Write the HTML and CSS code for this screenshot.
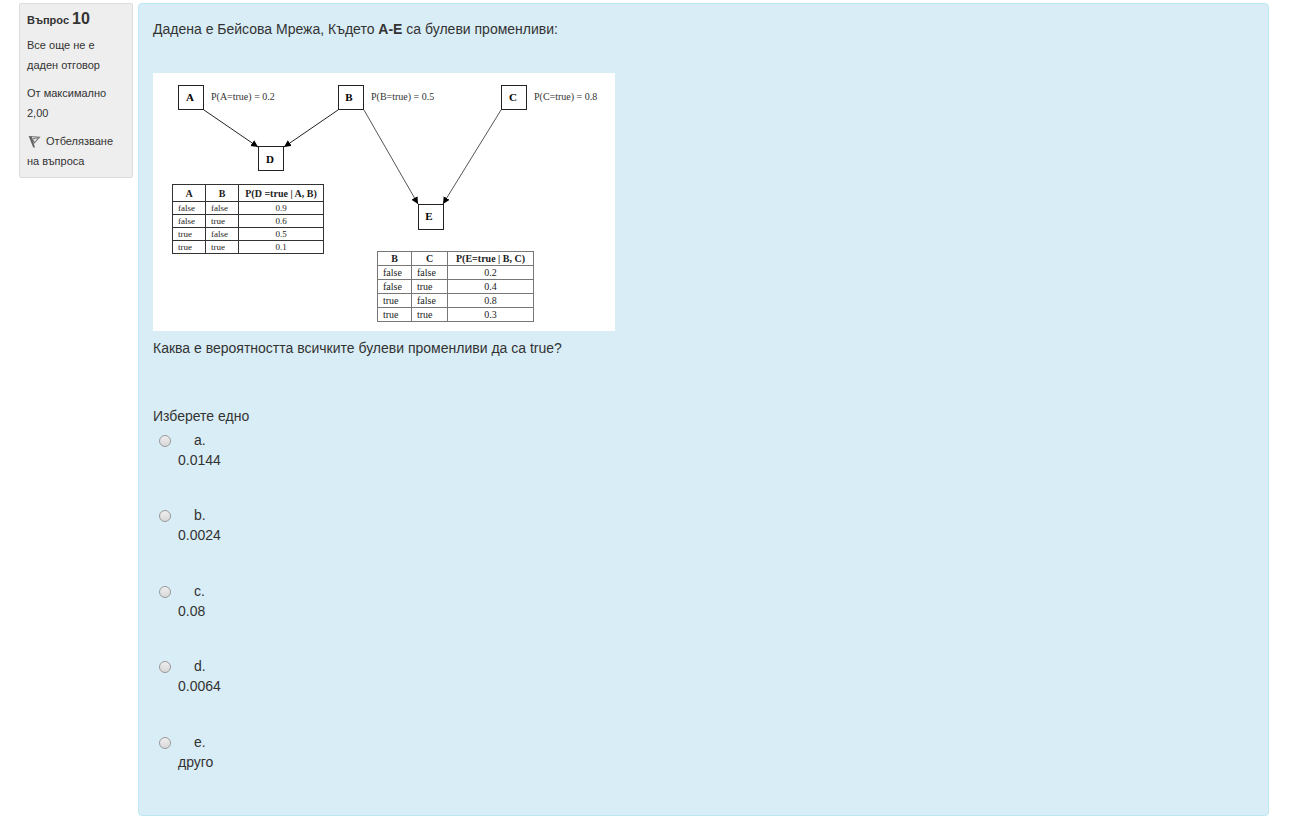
FILE: index.html
```html
<!DOCTYPE html>
<html lang="bg">
<head>
<meta charset="utf-8">
<title>Въпрос 10</title>
<link rel="stylesheet" href="styles.css">
</head>
<body>
<main class="question">
  <aside class="info">
    <h3 class="info-title">Въпрос <span class="number">10</span></h3>
    <p class="info-text">Все още не е даден отговор</p>
    <p class="info-text">От максимално 2,00</p>
    <p class="info-text"><svg class="flag" viewBox="0 0 16 16" aria-hidden="true"><path d="M3 2.5 12.5 3.2 7.4 8.8 5.4 5.2M12.5 3.2 5.6 5" fill="none" stroke="#777" stroke-width="1.1"/><path d="M1.6 2 4.8 2.6 8 13.4H6.2Z" fill="#666"/></svg> Отбелязване на въпроса</p>
  </aside>
  <section class="formulation">
    <p class="text">Дадена е Бейсова Мрежа, Където <b>A-E</b> са булеви променливи:</p>
    <div class="network">
      <svg class="graph" width="462" height="258" viewBox="0 0 462 258">
        <defs>
          <marker id="arrow" markerUnits="userSpaceOnUse" markerWidth="8" markerHeight="8" refX="7" refY="3.5" orient="auto"><path d="M0 0 7 3.5 0 7Z"/></marker>
        </defs>
        <g class="edges">
          <path d="M51 37 105 74"/>
          <path d="M185 37 131 74"/>
          <path class="thin" d="M211 37 265 131"/>
          <path class="thin" d="M348 37 290 131"/>
        </g>
        <g class="nodes">
          <rect x="25.5" y="12.5" width="25" height="24"/>
          <rect x="185.5" y="12.5" width="25" height="24"/>
          <rect x="348.5" y="12.5" width="25" height="24"/>
          <rect x="105.5" y="73.5" width="25" height="24"/>
          <rect x="265.5" y="131.5" width="25" height="25"/>
        </g>
        <g class="names">
          <text x="37" y="28">A</text>
          <text x="196" y="28">B</text>
          <text x="360" y="28">C</text>
          <text x="117" y="90">D</text>
          <text x="276" y="147">E</text>
        </g>
        <g class="priors">
          <text x="58" y="27">P(A=true) = 0.2</text>
          <text x="218" y="27">P(B=true) = 0.5</text>
          <text x="381" y="27">P(C=true) = 0.8</text>
        </g>
      </svg>
      <table class="cpt cpt-d">
        <thead><tr><th>A</th><th>B</th><th>P(D =true | A, B)</th></tr></thead>
        <tbody>
          <tr><td>false</td><td>false</td><td>0.9</td></tr>
          <tr><td>false</td><td>true</td><td>0.6</td></tr>
          <tr><td>true</td><td>false</td><td>0.5</td></tr>
          <tr><td>true</td><td>true</td><td>0.1</td></tr>
        </tbody>
      </table>
      <table class="cpt cpt-e">
        <thead><tr><th>B</th><th>C</th><th>P(E=true | B, C)</th></tr></thead>
        <tbody>
          <tr><td>false</td><td>false</td><td>0.2</td></tr>
          <tr><td>false</td><td>true</td><td>0.4</td></tr>
          <tr><td>true</td><td>false</td><td>0.8</td></tr>
          <tr><td>true</td><td>true</td><td>0.3</td></tr>
        </tbody>
      </table>
    </div>
    <p class="text">Каква е вероятността всичките булеви променливи да са true?</p>
    <fieldset class="answers">
      <legend class="prompt">Изберете едно</legend>
      <div class="options">
        <div class="option"><input type="radio" name="answer" id="a"><label for="a"><span class="letter">a.</span>0.0144</label></div>
        <div class="option"><input type="radio" name="answer" id="b"><label for="b"><span class="letter">b.</span>0.0024</label></div>
        <div class="option"><input type="radio" name="answer" id="c"><label for="c"><span class="letter">c.</span>0.08</label></div>
        <div class="option"><input type="radio" name="answer" id="d"><label for="d"><span class="letter">d.</span>0.0064</label></div>
        <div class="option"><input type="radio" name="answer" id="e"><label for="e"><span class="letter">e.</span>друго</label></div>
      </div>
    </fieldset>
  </section>
</main>
</body>
</html>
```
FILE: styles.css
```css
* { box-sizing: border-box; }
body {
  margin: 0;
  background: #fff;
  color: #333;
  font: 14px/20px "Liberation Sans", Arial, sans-serif;
}
.question {
  display: flex;
  align-items: flex-start;
  gap: 5px;
  padding: 3px 30px 14px 19px;
}
.info {
  flex: 0 0 114px;
  padding: 5px 7px 6px;
  border: 1px solid #dcdcdc;
  border-radius: 2px;
  background: #eee;
  font-size: 11px;
}
.info-title {
  margin: 0 0 5px;
  font-size: 11px;
  line-height: 20px;
}
.number { font-size: 16px; }
.info-text { margin: 0 0 8px; }
.info-text:last-child { margin: 0; }
.flag {
  width: 16px;
  height: 16px;
  vertical-align: middle;
}
.formulation {
  flex: 1;
  min-width: 0;
  padding: 15px 14px 0;
  border: 1px solid #bce8f1;
  border-radius: 4px;
  background: #d9edf6;
}
.text { margin: 0; }
.network {
  position: relative;
  width: 462px;
  margin: 34px 0 7px;
  background: #fff;
  color: #222;
  font-family: "Liberation Serif", "Times New Roman", serif;
}
.graph { display: block; }
.edges { fill: none; stroke: #222; }
.edges path { marker-end: url(#arrow); }
.edges .thin { stroke: #555; }
.nodes { fill: #fff; stroke: #222; }
.names {
  font-size: 11px;
  font-weight: bold;
  text-anchor: middle;
}
.priors { font-size: 10px; fill: #333; }
.cpt {
  position: absolute;
  border-collapse: collapse;
  table-layout: fixed;
  font-size: 10px;
  line-height: 12px;
}
.cpt th, .cpt td {
  padding: 0;
  border: 1px solid #333;
  white-space: nowrap;
}
.cpt td { padding-left: 5px; }
.cpt td:last-child { padding: 0; text-align: center; }
.cpt-d { left: 19px; top: 111px; width: 152px; }
.cpt-d th { height: 17px; padding-top: 2px; }
.cpt-d td { height: 13px; font-size: 9px; }
.cpt-d th:first-child, .cpt-d th:nth-child(2) { width: 33px; }
.cpt-e { left: 224px; top: 178px; width: 157px; }
.cpt-e th, .cpt-e td { height: 14px; border-color: #777; }
.cpt-e th:first-child { width: 34px; }
.cpt-e th:nth-child(2) { width: 36px; }
.answers {
  margin: 48px 0 0;
  padding: 0;
  border: 0;
}
.prompt { padding: 0; }
.options {
  display: grid;
  grid-auto-rows: 1fr;
  min-height: 377px;
  margin: 4px 0 8px;
}
.option {
  display: flex;
  align-items: flex-start;
  gap: 7px;
}
.option input {
  appearance: none;
  flex: none;
  width: 12px;
  height: 12px;
  margin: 5px 0 0 6px;
  border: 1px solid #999;
  border-radius: 50%;
  background: linear-gradient(#eee, #d8d8d8);
}
.option input:checked { background: radial-gradient(#444 3px, #e4e4e4 4px); }
.letter { display: block; padding-left: 16px; }
```
